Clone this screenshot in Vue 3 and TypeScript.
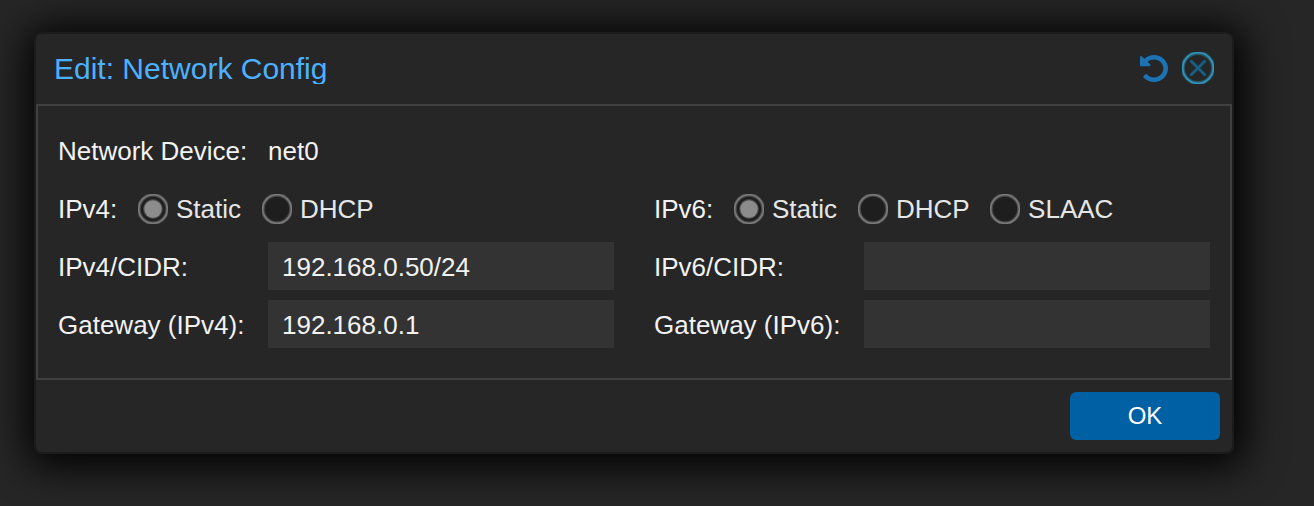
<script setup lang="ts">
import { ref } from 'vue'

interface Column {
  name: string
  modes: string[]
}

const columns: Column[] = [
  { name: 'IPv4', modes: ['Static', 'DHCP'] },
  { name: 'IPv6', modes: ['Static', 'DHCP', 'SLAAC'] },
]
const selected = ref<string[]>(['Static', 'Static'])
const cidr = ref<string[]>(['192.168.0.50/24', ''])
const gateway = ref<string[]>(['192.168.0.1', ''])
</script>

<template>
  <div class="page">
    <section class="dialog" role="dialog" aria-label="Edit: Network Config">
      <header class="header">
        <h1 class="title">Edit: Network Config</h1>
        <button class="tool reset" type="button" aria-label="Reset">
          <svg width="28" height="27" viewBox="0 0 1536 1536" preserveAspectRatio="none">
            <path
              fill="#1b73b4"
              d="M1536 768q0 156-61 298t-164 245-245 164-298 61q-172 0-327-72.500T177 1259q-7-10-6.500-22.500T179 1216l137-138q10-9 25-9 16 2 23 12 73 95 179 147t225 52q104 0 198.500-40.500T1130 1130t109.500-163.500T1280 768t-40.500-198.500T1130 406 966.500 296.500 768 256q-98 0-188 35.500T420 393l137 138q31 30 14 69-17 40-59 40H64q-26 0-45-19T0 576V128q0-42 40-59 39-17 69 14l130 129Q346 111 483.500 55.500T768 0q156 0 298 61t245 164 164 245 61 298z"
            />
          </svg>
        </button>
        <button class="tool" type="button" aria-label="Close">
          <svg width="32" height="32" viewBox="0 0 32 32" fill="none">
            <circle cx="16" cy="16" r="15.100" stroke="#2c86a8" stroke-opacity="0.5" stroke-width="4" />
            <circle cx="16" cy="16" r="15.300" stroke="#2fa0cc" stroke-opacity="0.85" stroke-width="1.800" />
            <path d="M8.500 8.500 23.500 23.500M23.500 8.500 8.500 23.500" stroke="#17587c" stroke-opacity="0.6" stroke-width="3.600" />
            <path d="M8.500 8.500 23.500 23.500M23.500 8.500 8.500 23.500" stroke="#176a9a" stroke-opacity="0.8" stroke-width="1.800" />
          </svg>
        </button>
      </header>

      <main class="body">
        <div class="row device">
          <span class="label">Network Device:</span>
          <span>net0</span>
        </div>
        <div class="columns">
          <div v-for="(column, i) in columns" :key="column.name" class="column">
            <div class="row modes">
              <span class="family">{{ column.name }}:</span>
              <label v-for="mode in column.modes" :key="mode" class="mode">
                <input v-model="selected[i]" class="native" type="radio" :name="column.name" :value="mode" />
                <svg class="radio" width="30" height="30" viewBox="0 0 30 30">
                  <circle cx="15" cy="15" r="14" fill="#1e1e1e" />
                  <circle cx="15" cy="15" r="14.100" fill="none" stroke="#777" stroke-opacity="0.45" stroke-width="3.800" />
                  <circle cx="15" cy="15" r="14.300" fill="none" stroke="#909090" stroke-opacity="0.7" stroke-width="1.700" />
                  <g v-if="selected[i] === mode" fill="#8c8c8c">
                    <circle cx="15" cy="15" r="9.900" fill-opacity="0.4" />
                    <circle cx="15" cy="15" r="8.700" />
                  </g>
                </svg>
                <span>{{ mode }}</span>
              </label>
            </div>
            <label class="row">
              <span class="label">{{ column.name }}/CIDR:</span>
              <input v-model="cidr[i]" class="field" type="text" />
            </label>
            <label class="row">
              <span class="label">Gateway ({{ column.name }}):</span>
              <input v-model="gateway[i]" class="field" type="text" />
            </label>
          </div>
        </div>
      </main>

      <footer class="footer">
        <button class="ok" type="button">OK</button>
      </footer>
    </section>
  </div>
</template>

<style>
body {
  margin: 0;
  background: #262626;
}
</style>

<style scoped>
.page {
  box-sizing: border-box;
  height: 506px;
  padding: 32px 80px 52px 34px;
  overflow: hidden;
  background: #262626;
  color: #f2f2f2;
  font: 26px/50px "Liberation Sans", Arial, sans-serif;
}
.dialog {
  box-sizing: border-box;
  display: flex;
  flex-direction: column;
  height: 422px;
  border: 2px solid #1c1c1c;
  border-radius: 8px;
  background: #262626;
  box-shadow: 2px 4px 40px 8px #000;
}
.header {
  display: flex;
  align-items: center;
  height: 70px;
  box-sizing: border-box;
  padding: 0 18px 2px;
}
.title {
  flex: 1;
  height: 32px;
  margin: 0;
  overflow: hidden;
  color: #4db1ff;
  font-size: 30px;
  font-weight: 400;
  line-height: 34px;
}
.tool {
  display: flex;
  padding: 0;
  border: 0;
  background: none;
}
.reset {
  margin-right: 14px;
  padding-top: 1px;
}
.body {
  box-sizing: border-box;
  height: 276px;
  padding: 20px;
  border: 2px solid #404040;
}
.row {
  display: flex;
  height: 48px;
  margin-bottom: 10px;
  white-space: nowrap;
}
.label {
  width: 210px;
  flex: none;
}
.columns {
  display: grid;
  grid-template-columns: repeat(2, minmax(0, 1fr));
  column-gap: 40px;
}
.family {
  width: 80px;
  flex: none;
}
.mode {
  display: flex;
  align-items: center;
  height: 50px;
  margin-right: 21px;
  color: #e6e6e6;
}
.mode + .mode {
  margin-right: 20.400px;
}
.native {
  appearance: none;
  width: 0;
  height: 0;
  margin: 0;
}
.radio {
  margin-right: 8px;
  flex: none;
}
.field {
  flex: 1;
  min-width: 0;
  box-sizing: border-box;
  height: 48px;
  padding: 2px 14px 0;
  border: 0;
  border-radius: 0;
  outline: 0;
  background: #333;
  color: #f2f2f2;
  font: inherit;
}
.footer {
  display: flex;
  justify-content: flex-end;
  padding: 12px;
}
.ok {
  width: 150px;
  height: 48px;
  padding: 0;
  border: 0;
  border-radius: 6px;
  background: #0060a4;
  color: #fff;
  font: 24px/48px "Liberation Sans", Arial, sans-serif;
}
</style>
